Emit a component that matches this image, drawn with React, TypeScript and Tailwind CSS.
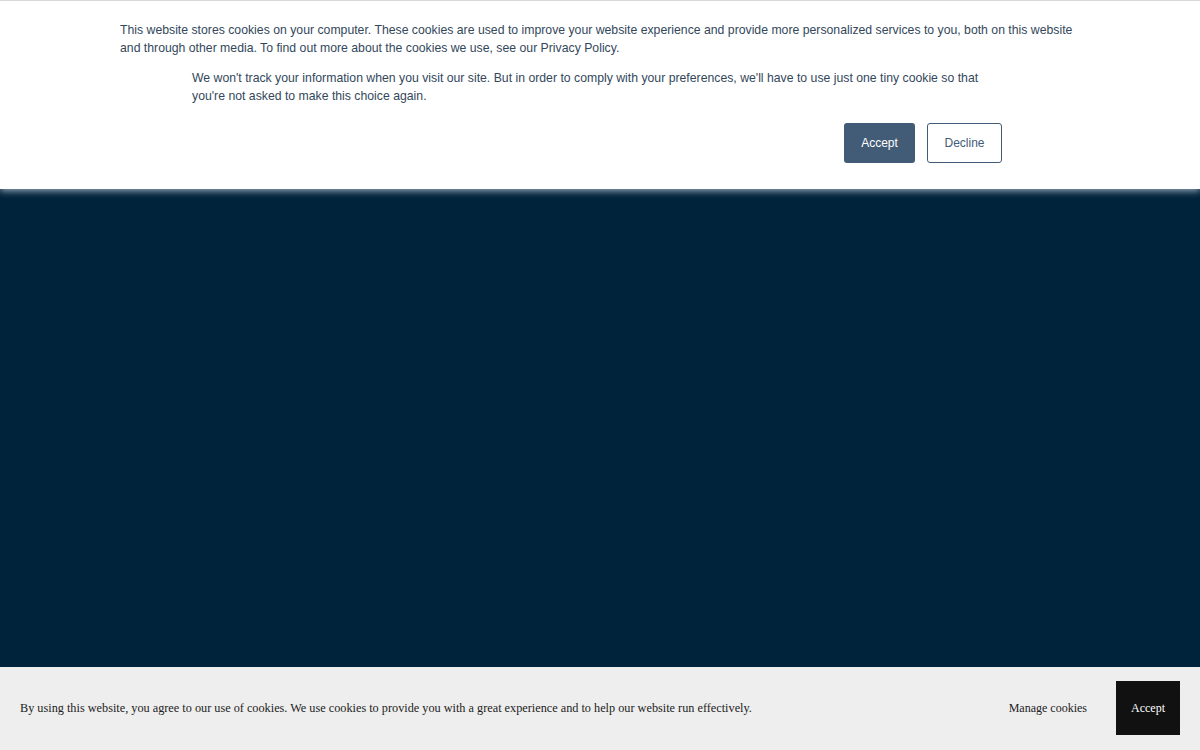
export default function App() {
  return (
    <div className="relative h-[750px] w-[1200px] overflow-hidden bg-[#00233c]">
      <div
        className="relative z-10 h-[189px] w-full border-t border-[#d8d8d8] bg-white shadow-[0_2px_7px_rgba(180,195,210,0.85)]"
        style={{ fontFamily: '"Liberation Sans", Arial, sans-serif' }}
      >
        <div className="mx-auto w-[960px] pt-[20px] text-[12.25px] leading-[18px] text-[#33475b]">
          <p>
            This website stores cookies on your computer. These cookies are used to improve your website experience and provide more personalized services to you, both on this website and through other media. To find out more about the cookies we use, see our Privacy Policy.
          </p>
        </div>
        <div className="mx-auto w-[816px] pt-[12px] text-[12.25px] leading-[18px] text-[#33475b]">
          <p>
            We won't track your information when you visit our site. But in order to comply with your preferences, we'll have to use just one tiny cookie so that you're not asked to make this choice again.
          </p>
          <div className="mt-[18px] flex justify-end gap-[12px] pr-[6px]">
            <button className="h-[40px] w-[71px] rounded-[3px] bg-[#425b76] text-[12px] text-white">
              Accept
            </button>
            <button className="h-[40px] w-[75px] rounded-[3px] border border-[#425b76] bg-white text-[12px] text-[#425b76]">
              Decline
            </button>
          </div>
        </div>
      </div>
      <div
        className="absolute bottom-0 left-0 flex h-[83px] w-full items-center justify-between bg-[#eeeeee] pb-[1px] pl-[20px] pr-[20px]"
        style={{ fontFamily: '"Liberation Serif", "Times New Roman", serif' }}
      >
        <p className="text-[12.25px] text-[#222]">
          By using this website, you agree to our use of cookies. We use cookies to provide you with a great experience and to help our website run effectively.
        </p>
        <div className="flex items-center">
          <button className="mr-[29px] text-[12px] text-[#222]">Manage cookies</button>
          <button className="h-[54px] w-[64px] bg-[#111111] text-[12px] text-white">Accept</button>
        </div>
      </div>
    </div>
  );
}
